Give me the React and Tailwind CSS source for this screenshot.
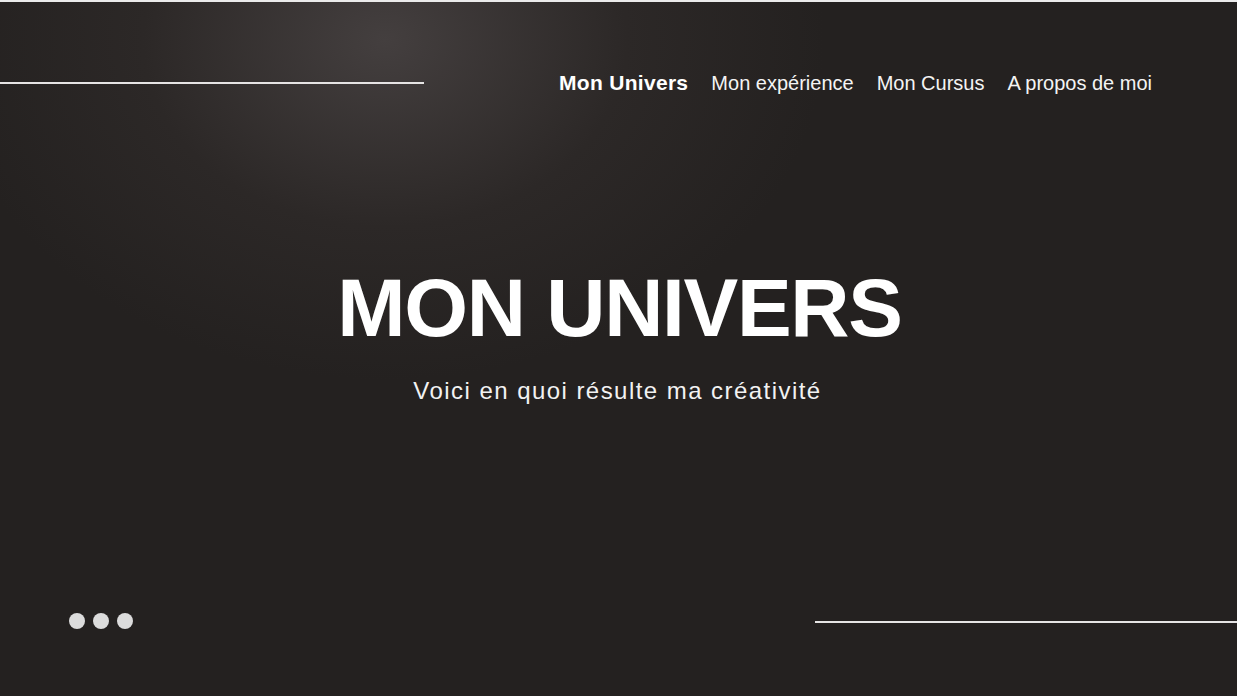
import React from 'react';

const navItems = ['Mon expérience', 'Mon Cursus', 'A propos de moi'];

export default function App() {
  return (
    <div className="w-[1237px] h-[696px] overflow-hidden flex flex-col bg-[#242120] bg-[radial-gradient(ellipse_440px_340px_at_385px_40px,#443f3f_0%,#2c2827_55%,#242120_100%)] text-white font-['Liberation_Sans',Arial,sans-serif]">
      <div className="h-[2px] bg-[#ebebeb]" />

      <header className="mt-[61px] h-10 flex items-center">
        <div className="w-[424px] h-[2px] bg-[#e6e4e4]" />
        <div className="flex-1" />
        <nav className="flex items-center gap-[23px] mr-[85px] text-[20px] leading-none">
          <a className="font-bold text-[21px] tracking-[0.3px] -mt-[2px]">Mon Univers</a>
          {navItems.map((item) => (
            <a key={item} className="text-[#f4f4f4]">
              {item}
            </a>
          ))}
        </nav>
      </header>

      <main className="flex flex-col items-center mt-[164px]">
        <h1 className="text-[82px] leading-none font-bold tracking-[-1.3px] ml-[2px]">MON UNIVERS</h1>
        <p className="mt-[30px] text-[24px] leading-none tracking-[1.45px] text-[#f2f2f2] -ml-[2px]">
          Voici en quoi résulte ma créativité
        </p>
      </main>

      <div className="flex-1" />

      <footer className="flex items-center h-4 mb-[67px]">
        <div className="flex gap-2 pl-[69px]">
          <span className="w-4 h-4 rounded-full bg-[#dcdcdc]" />
          <span className="w-4 h-4 rounded-full bg-[#dcdcdc]" />
          <span className="w-4 h-4 rounded-full bg-[#dcdcdc]" />
        </div>
        <div className="flex-1" />
        <div className="w-[422px] h-[2px] bg-[#e6e4e4] mt-[2px]" />
      </footer>
    </div>
  );
}
